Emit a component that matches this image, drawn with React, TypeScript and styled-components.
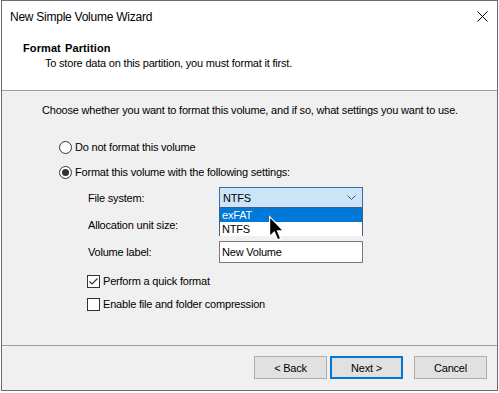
import React from 'react';
import styled, { createGlobalStyle } from 'styled-components';

const Global = createGlobalStyle`
  html, body { margin: 0; padding: 0; background: #ffffff; }
  body {
    font-family: "Liberation Sans", Arial, sans-serif;
    font-size: 11px;
    color: #000;
    letter-spacing: -0.2px;
  }
  * { box-sizing: border-box; }
`;

const Page = styled.div`
  width: 499px;
  height: 393px;
  padding-left: 1px;
  overflow: hidden;
`;

const Window = styled.div`
  width: 497px;
  height: 391px;
  border: 1px solid #6b6b78;
  display: flex;
  flex-direction: column;
  background: #f0f0f0;
`;

const TitleBar = styled.div`
  height: 30px;
  flex: none;
  background: #fff;
  display: flex;
  align-items: center;
  justify-content: space-between;
  padding: 0 8px 0 8px;
`;

const TitleText = styled.span`
  font-size: 12px;
  letter-spacing: -0.25px;
  line-height: 14px;
  margin-top: 1px;
`;

const CloseIcon = styled.svg`
  width: 11px;
  height: 11px;
  display: block;
  margin-right: 1px;
`;

const Header = styled.div`
  height: 60px;
  flex: none;
  background: #fff;
  border-bottom: 1px solid #a0a0a0;
  padding: 10px 0 0 21px;
  display: flex;
  flex-direction: column;
  gap: 1px;
`;

const HeaderTitle = styled.div`
  font-weight: bold;
  font-size: 11px;
  letter-spacing: 0.1px;
  line-height: 14px;
  word-spacing: 1px;
`;

const HeaderSub = styled.div`
  line-height: 14px;
  padding-left: 22px;
`;

const Body = styled.div`
  flex: 1;
  border-bottom: 1px solid #a0a0a0;
  padding: 12px 0 0 40px;
  display: flex;
  flex-direction: column;
`;

const Line = styled.div`
  line-height: 14px;
`;

const OptionGroup = styled.div<{ $top: number; $left: number; $gap: number }>`
  display: flex;
  flex-direction: column;
  gap: ${p => p.$gap}px;
  margin-top: ${p => p.$top}px;
  padding-left: ${p => p.$left}px;
`;

const OptionRow = styled.label`
  display: flex;
  align-items: center;
  height: 16px;
  gap: 3px;
  line-height: 14px;
`;

const RadioDot = styled.span<{ $checked?: boolean }>`
  width: 13px;
  height: 13px;
  border-radius: 50%;
  border: 1px solid #333;
  background: #fff;
  display: flex;
  align-items: center;
  justify-content: center;
  flex: none;
  &::after {
    content: '';
    width: 7px;
    height: 7px;
    border-radius: 50%;
    background: #333;
    display: ${p => (p.$checked ? 'block' : 'none')};
  }
`;

const CheckBox = styled.span`
  width: 13px;
  height: 13px;
  border: 1px solid #333;
  background: #fff;
  display: flex;
  align-items: center;
  justify-content: center;
  flex: none;
`;

const Settings = styled.div`
  display: grid;
  grid-template-columns: 131px 144px;
  grid-auto-rows: 21px;
  row-gap: 6px;
  margin-top: 7px;
  margin-left: 46px;
  align-items: center;
`;

const FieldLabel = styled.div`
  line-height: 14px;
`;

const Combo = styled.div<{ $open?: boolean }>`
  position: relative;
  height: 21px;
  border: 1px solid ${p => (p.$open ? '#2f6fae' : '#7a7a7a')};
  background: ${p => (p.$open ? '#cce4f7' : '#e5e5e5')};
  display: flex;
  align-items: center;
  justify-content: space-between;
  padding: 0 6px 0 3px;
  line-height: 14px;
`;

const Chevron = styled.svg`
  width: 9px;
  height: 5px;
  display: block;
`;

const DropList = styled.div`
  position: absolute;
  top: 19px;
  left: -1px;
  width: 144px;
  height: 29px;
  border: 1px solid #3e5e8c;
  background: #fff;
  z-index: 2;
  display: flex;
  flex-direction: column;
`;

const DropItem = styled.div<{ $selected?: boolean }>`
  height: 14px;
  line-height: 14px;
  padding-left: 2px;
  background: ${p => (p.$selected ? '#0078d7' : '#fff')};
  color: ${p => (p.$selected ? '#fff' : '#000')};
`;

const Cursor = styled.svg`
  position: absolute;
  left: 49px;
  top: 28px;
  width: 16px;
  height: 26px;
  z-index: 3;
  overflow: visible;
`;

const TextBox = styled.div`
  height: 22px;
  border: 1px solid #7a7a7a;
  background: #fff;
  display: flex;
  align-items: center;
  padding-left: 2px;
  line-height: 14px;
  margin-top: 1px;
`;

const Footer = styled.div`
  height: 44px;
  flex: none;
  display: flex;
  justify-content: flex-end;
  align-items: flex-start;
  padding: 10px 10px 0 0;
`;

const Button = styled.button<{ $primary?: boolean; $gapLeft: number }>`
  width: 73px;
  height: 23px;
  margin-left: ${p => p.$gapLeft}px;
  background: #e1e1e1;
  border: 1px solid ${p => (p.$primary ? '#0078d7' : '#adadad')};
  box-shadow: ${p => (p.$primary ? 'inset 0 0 0 1px #0078d7' : 'none')};
  font-family: "Liberation Sans", Arial, sans-serif;
  font-size: 11px;
  letter-spacing: -0.2px;
  color: #000;
  padding: 0;
  line-height: 14px;
`;

export default function App() {
  return (
    <>
      <Global />
      <Page>
        <Window>
          <TitleBar>
            <TitleText>New Simple Volume Wizard</TitleText>
            <CloseIcon viewBox="0 0 11 11">
              <path d="M0.5 0.5 L10.5 10.5 M10.5 0.5 L0.5 10.5" stroke="#000" strokeWidth="1" fill="none" />
            </CloseIcon>
          </TitleBar>
          <Header>
            <HeaderTitle>Format Partition</HeaderTitle>
            <HeaderSub>To store data on this partition, you must format it first.</HeaderSub>
          </Header>
          <Body>
            <Line>Choose whether you want to format this volume, and if so, what settings you want to use.</Line>
            <OptionGroup $top={22} $left={17} $gap={9}>
              <OptionRow>
                <RadioDot />
                <span>Do not format this volume</span>
              </OptionRow>
              <OptionRow>
                <RadioDot $checked />
                <span>Format this volume with the following settings:</span>
              </OptionRow>
            </OptionGroup>
            <Settings>
              <FieldLabel>File system:</FieldLabel>
              <Combo $open>
                <span>NTFS</span>
                <Chevron viewBox="0 0 9 5">
                  <path d="M0.5 0.5 L4.5 4.5 L8.5 0.5" stroke="#555" strokeWidth="1" fill="none" />
                </Chevron>
                <DropList>
                  <DropItem $selected>exFAT</DropItem>
                  <DropItem>NTFS</DropItem>
                </DropList>
                <Cursor viewBox="0 0 13 21">
                  <path
                    d="M0.5 0.5 L0.5 16.5 L4.3 12.9 L7 19.3 L9.5 18.3 L6.9 12.1 L11.9 12.1 Z"
                    fill="#000"
                    stroke="#fff"
                    strokeWidth="1"
                    strokeLinejoin="miter"
                  />
                </Cursor>
              </Combo>
              <FieldLabel>Allocation unit size:</FieldLabel>
              <Combo />
              <FieldLabel>Volume label:</FieldLabel>
              <TextBox>New Volume</TextBox>
            </Settings>
            <OptionGroup $top={11} $left={45} $gap={7}>
              <OptionRow>
                <CheckBox>
                  <svg width="11" height="11" viewBox="0 0 11 11">
                    <path d="M1.5 5.5 L4 8 L9.5 2.5" stroke="#333" strokeWidth="1.2" fill="none" />
                  </svg>
                </CheckBox>
                <span>Perform a quick format</span>
              </OptionRow>
              <OptionRow>
                <CheckBox />
                <span>Enable file and folder compression</span>
              </OptionRow>
            </OptionGroup>
          </Body>
          <Footer>
            <Button $gapLeft={0}>&lt; Back</Button>
            <Button $primary $gapLeft={3}>Next &gt;</Button>
            <Button $gapLeft={11}>Cancel</Button>
          </Footer>
        </Window>
      </Page>
    </>
  );
}
